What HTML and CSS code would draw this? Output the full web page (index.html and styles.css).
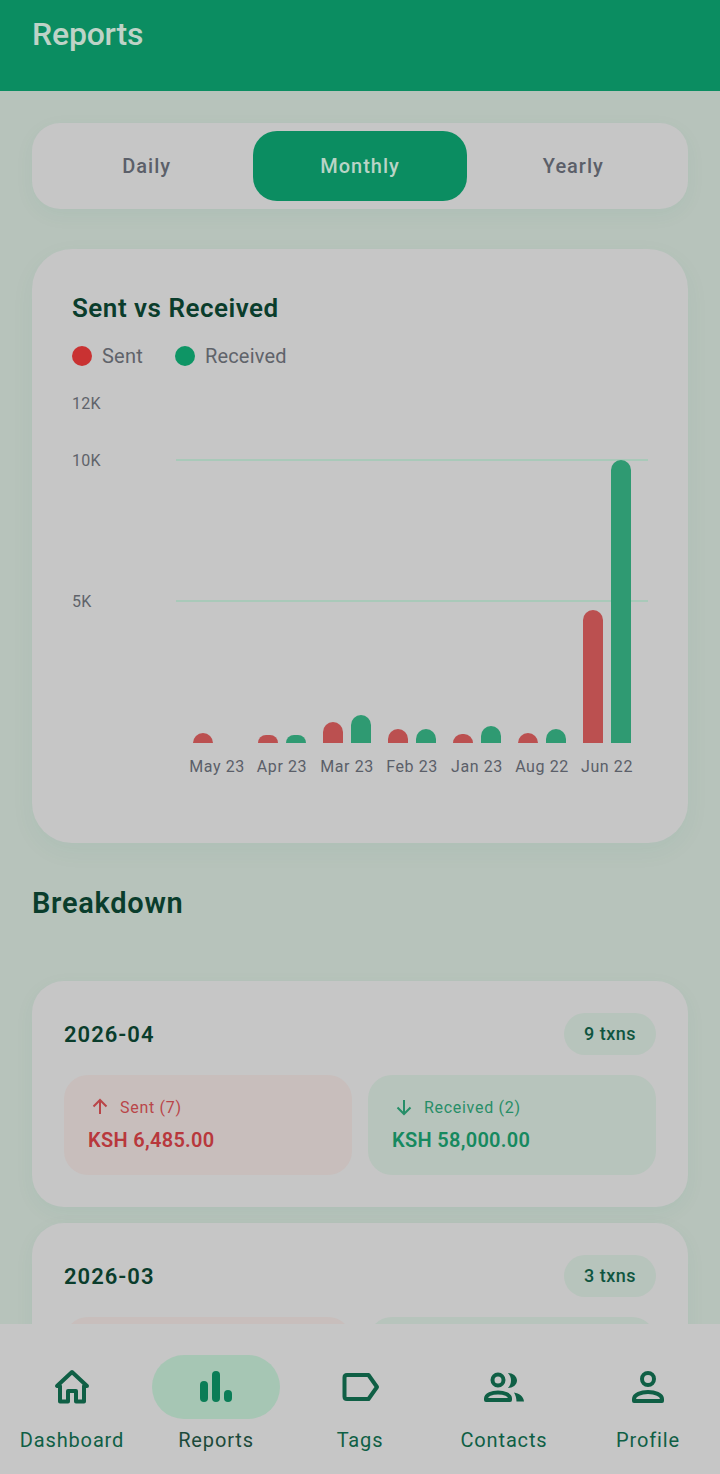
FILE: index.html
```html
<!DOCTYPE html>
<html lang="en">
<head>
<meta charset="utf-8">
<title>Reports</title>
<link rel="stylesheet" href="styles.css">
</head>
<body>
<div class="app">
  <header class="topbar"><h1>Reports</h1></header>
  <main class="content">
    <div class="tabs">
      <div class="tab">Daily</div>
      <div class="tab active">Monthly</div>
      <div class="tab">Yearly</div>
    </div>

    <section class="chart-card">
      <h2>Sent vs Received</h2>
      <div class="legend">
        <span class="legend-item"><i class="dot dot-red"></i>Sent</span>
        <span class="legend-item"><i class="dot dot-green"></i>Received</span>
      </div>
      <div class="chart">
        <span class="y-label" style="top:18px">12K</span>
        <span class="y-label" style="top:75px">10K</span>
        <span class="y-label" style="top:216px">5K</span>
        <i class="gridline" style="top:73px"></i>
        <i class="gridline" style="top:214px"></i>
        <div class="plot">
          <div class="col"><div class="bars"><i class="bar red" style="height:10px"></i><i class="bar green" style="height:0"></i></div><span>May 23</span></div>
          <div class="col"><div class="bars"><i class="bar red" style="height:8px"></i><i class="bar green" style="height:8px"></i></div><span>Apr 23</span></div>
          <div class="col"><div class="bars"><i class="bar red" style="height:21px"></i><i class="bar green" style="height:28px"></i></div><span>Mar 23</span></div>
          <div class="col"><div class="bars"><i class="bar red" style="height:14px"></i><i class="bar green" style="height:14px"></i></div><span>Feb 23</span></div>
          <div class="col"><div class="bars"><i class="bar red" style="height:9px"></i><i class="bar green" style="height:17px"></i></div><span>Jan 23</span></div>
          <div class="col"><div class="bars"><i class="bar red" style="height:10px"></i><i class="bar green" style="height:14px"></i></div><span>Aug 22</span></div>
          <div class="col"><div class="bars"><i class="bar red" style="height:133px"></i><i class="bar green" style="height:283px"></i></div><span>Jun 22</span></div>
        </div>
      </div>
    </section>

    <h2 class="section-title">Breakdown</h2>

    <section class="month-card">
      <div class="month-head"><span class="month">2026-04</span><span class="pill">9 txns</span></div>
      <div class="tiles">
        <div class="tile tile-sent">
          <div class="tile-label"><svg class="arrow" viewBox="0 0 20 20"><path d="M10 17V3M3.500 9.500 10 3l6.500 6.500"/></svg>Sent (7)</div>
          <div class="amount">KSH 6,485.00</div>
        </div>
        <div class="tile tile-recv">
          <div class="tile-label"><svg class="arrow" viewBox="0 0 20 20"><path d="M10 3v14M3.500 10.500 10 17l6.500-6.500"/></svg>Received (2)</div>
          <div class="amount">KSH 58,000.00</div>
        </div>
      </div>
    </section>

    <section class="month-card">
      <div class="month-head"><span class="month">2026-03</span><span class="pill">3 txns</span></div>
      <div class="tiles">
        <div class="tile tile-sent"></div>
        <div class="tile tile-recv"></div>
      </div>
    </section>
  </main>

  <nav class="bottom-nav">
    <div class="nav-item">
      <div class="nav-icon"><svg viewBox="0 0 40 40"><path class="line thick" d="M20 5 5 19H8V34.500H16V24H24V34.500H32V19H35Z"/></svg></div>
      <span>Dashboard</span>
    </div>
    <div class="nav-item current">
      <div class="nav-icon"><svg viewBox="0 0 40 40"><rect class="fill-bar" x="4" y="14" width="8" height="21" rx="4"/><rect class="fill-bar" x="16" y="4" width="8" height="31" rx="4"/><rect class="fill-bar" x="28" y="23" width="8" height="12" rx="4"/></svg></div>
      <span>Reports</span>
    </div>
    <div class="nav-item">
      <div class="nav-icon"><svg viewBox="0 0 40 40"><path class="line thick" d="M7 8H28.500L37 20 28.500 32H7Q4.500 32 4.500 29.500V10.500Q4.500 8 7 8Z"/></svg></div>
      <span>Tags</span>
    </div>
    <div class="nav-item">
      <div class="nav-icon"><svg viewBox="0 0 40 40"><circle class="line thick" cx="14" cy="13" r="5.500"/><path class="line thick" d="M2 33V31.500C2 27.500 8 25.500 14 25.500S26 27.500 26 31.500V33Z"/><path class="solid" d="M24 6c4.500 0 9 3 9 7.500S28.500 21 24 21c2-2 3-5 3-7.500S26 8 24 6ZM30 25.500c5 1 9.500 3.500 10 9h-7.500c0-3-1-6.500-2.500-9Z"/></svg></div>
      <span>Contacts</span>
    </div>
    <div class="nav-item">
      <div class="nav-icon"><svg viewBox="0 0 40 40"><circle class="line thick" cx="20" cy="12" r="6"/><path class="line thick" d="M6 34V32C6 27.500 13 25 20 25S34 27.500 34 32V34Z"/></svg></div>
      <span>Profile</span>
    </div>
  </nav>
</div>
</body>
</html>
```

FILE: styles.css
```css
* { box-sizing: border-box; }
html, body { margin: 0; padding: 0; }
body { font-family: Roboto, "Liberation Sans", sans-serif; background: #b7c3bb; }
h1, h2 { margin: 0; }

.app { width: 720px; height: 1474px; display: flex; flex-direction: column; overflow: hidden; }

.topbar { height: 91px; flex: none; background: #0b8d61; padding: 14px 32px 0; }
.topbar h1 { font-size: 32px; line-height: 40px; font-weight: 500; color: #bed3c7; letter-spacing: -0.2px; }

.content { flex: 1; min-height: 0; overflow: hidden; padding: 32px 32px 0; }

.tabs { height: 86px; background: #c6c6c6; border-radius: 28px; padding: 8px; display: flex; box-shadow: 0 6px 20px rgba(11, 143, 98, .05); }
.tab { flex: 1; display: flex; align-items: center; justify-content: center; font-size: 20px; font-weight: 500; letter-spacing: 1px; color: #5b5f69; border-radius: 24px; }
.tab.active { background: #0b8d61; color: #b9d4c6; }

.chart-card { margin-top: 40px; height: 594px; background: #c6c6c6; border-radius: 40px; padding: 40px; box-shadow: 0 8px 24px rgba(11, 143, 98, .05); }
.chart-card h2 { font-size: 26px; line-height: 38px; font-weight: 600; color: #0a3d2c; letter-spacing: .5px; }

.legend { margin-top: 19px; height: 20px; display: flex; gap: 32px; }
.legend-item { display: flex; align-items: center; gap: 10px; font-size: 20px; color: #5f636a; letter-spacing: .2px; }
.dot { width: 20px; height: 20px; border-radius: 50%; }
.dot-red { background: #c93232; }
.dot-green { background: #0e9565; }

.chart { position: relative; height: 417px; margin-top: 20px; }
.y-label { position: absolute; left: 0; transform: translateY(-50%); font-size: 16px; line-height: 20px; color: #5f636a; letter-spacing: .3px; }
.gridline { position: absolute; left: 104px; width: 472px; height: 2px; background: #a9c9b9; }
.plot { position: absolute; left: 112.500px; top: 17px; display: flex; }
.col { position: relative; width: 65px; display: flex; flex-direction: column; align-items: center; }
.col span { margin-top: 14px; font-size: 16px; line-height: 20px; color: #5b5f69; letter-spacing: .6px; white-space: nowrap; }
.bars { height: 340px; display: flex; align-items: flex-end; gap: 8px; }
.bar { display: block; width: 20px; border-radius: 10px 10px 0 0; }
.bar.red { background: #bb5050; }
.bar.green { background: #2f9a72; }

.section-title { margin-top: 42px; font-size: 29px; line-height: 36px; font-weight: 600; color: #0a3d2c; letter-spacing: .7px; }

.month-card { margin-top: 16px; height: 226px; background: #c6c6c6; border-radius: 32px; padding: 32px; box-shadow: 0 6px 20px rgba(11, 143, 98, .05); }
.section-title + .month-card { margin-top: 60px; }
.month-head { height: 42px; display: flex; justify-content: space-between; align-items: center; }
.month { font-size: 22px; font-weight: 600; color: #0a3d2c; letter-spacing: 1px; }
.pill { height: 42px; padding: 0 20px 2px; border-radius: 21px; background: #b7c4bc; display: flex; align-items: center; font-size: 18px; font-weight: 500; color: #0f5540; letter-spacing: .5px; }

.tiles { margin-top: 20px; display: flex; gap: 16px; }
.tile { flex: 1; height: 100px; border-radius: 24px; padding: 20px 24px; }
.tile-sent { background: #c8bebc; color: #b8383c; }
.tile-recv { background: #b7c4bc; color: #16895f; }
.tile-label { display: flex; align-items: center; gap: 10px; height: 24px; font-size: 16px; letter-spacing: .7px; opacity: .9; }
.arrow { width: 22px; height: 20px; padding-left: 2px; fill: none; stroke: currentColor; stroke-width: 2; }
.amount { margin-top: 7px; font-size: 20px; line-height: 28px; font-weight: 600; letter-spacing: .3px; }

.bottom-nav { height: 150px; flex: none; background: #c6c6c6; display: flex; padding-top: 31px; }
.nav-item { width: 144px; display: flex; flex-direction: column; align-items: center; font-size: 20px; line-height: 24px; font-weight: 400; letter-spacing: .85px; color: #0f5f45; }
.nav-icon { width: 128px; height: 64px; border-radius: 32px; display: flex; align-items: center; justify-content: center; }
.nav-icon svg { width: 40px; height: 40px; }
.nav-item span { margin-top: 9px; }
.nav-item.current span { color: #1c4a3a; }
.nav-item.current .nav-icon { background: #a6c6b4; }
.line { fill: none; stroke: #0f5f45; stroke-linejoin: round; }
.thick { stroke-width: 4; }
.solid { fill: #0f5f45; }
.fill-bar { fill: #0a7d57; }
```
